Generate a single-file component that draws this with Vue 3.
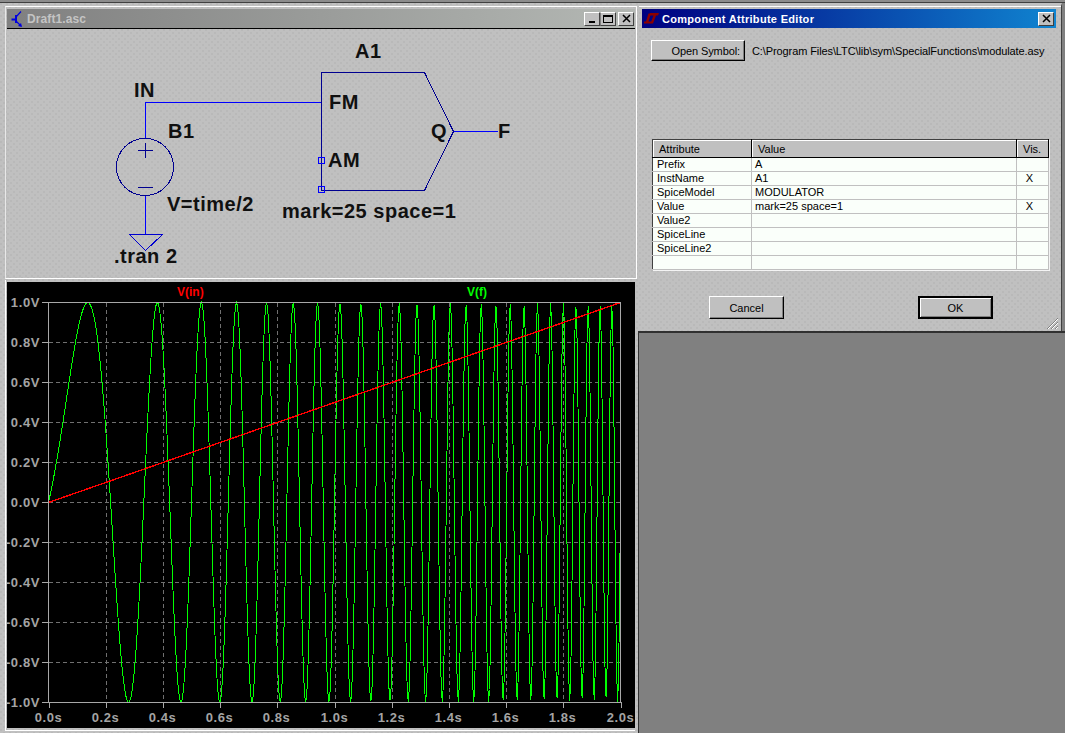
<script setup>
  // plot area of the waveform pane, in page pixels
  const left = 48.5;
  const right = 620.5;
  const zero = 501.5;
  const volts = 200;
  const perSec = (right - left) / 2;

  const xTicks = [];
  for (let i = 0; i <= 10; i++) {
    xTicks.push({ x: Math.round(left + i * 57.2) + 0.5, label: (i * 0.2).toFixed(1) + "s" });
  }

  const yTicks = [];
  for (let i = 5; i >= -5; i--) {
    yTicks.push({ y: zero - i * 40, label: (i * 0.2).toFixed(1) + "V" });
  }

  // MODULATOR output with mark=25 space=1, FM = time/2
  const points = [];
  for (let x = 0; x <= right - left; x++) {
    const t = x / perSec;
    const y = zero - volts * Math.sin(2 * Math.PI * (t + 6 * t * t));
    points.push((left + x) + "," + y.toFixed(1));
  }
  const trace = points.join(" ");

  const rows = [
    { name: "Prefix", value: "A", vis: "" },
    { name: "InstName", value: "A1", vis: "X" },
    { name: "SpiceModel", value: "MODULATOR", vis: "" },
    { name: "Value", value: "mark=25 space=1", vis: "X" },
    { name: "Value2", value: "", vis: "" },
    { name: "SpiceLine", value: "", vis: "" },
    { name: "SpiceLine2", value: "", vis: "" },
    { name: "", value: "", vis: "" },
  ];
</script>

<template>
  <main class="desk">
    <div class="strip"></div>
    <div class="panes">
      <section class="left dither">
        <div class="schematic">
          <header class="mdi-title">
            <svg class="app-icon" width="12" height="16" viewBox="0 0 12 16">
              <path d="M0.5 8.5H5M5 4V12" stroke="#0000e0" stroke-width="2" fill="none" />
              <path d="M5 6L10 0.5M5 10L10 15" stroke="#0000e0" stroke-width="1.2" fill="none" />
              <path d="M11 16L7 15L10 12Z" fill="#0000e0" />
            </svg>
            <span class="mdi-name">Draft1.asc</span>
            <span class="win-btn gap"><i class="min"></i></span>
            <span class="win-btn flat"><i class="max"></i></span>
            <span class="win-btn close"><svg width="9" height="9" viewBox="0 0 9 9"><path d="M1 1L8 8M8 1L1 8" stroke="#000" stroke-width="1.5" /></svg></span>
          </header>
          <svg class="canvas dither" width="628" height="248" viewBox="7 29 628 248">
            <g class="wire">
              <path d="M145.5 138V102.5H321.5" />
              <path d="M145.5 196V234" />
              <path d="M453.5 131.5H498" />
            </g>
            <g class="sym">
              <circle cx="145" cy="167" r="28.5" />
              <path d="M138 150.5H153M145.5 143V158M138 187.5H153" />
              <path d="M129.5 234.5H162.5L145.5 250.5Z" class="gnd" />
              <path d="M321.5 72.5H424.5L453.5 131.5L424.5 190.5H321.5Z" />
            </g>
            <g class="pin">
              <rect x="318.5" y="157.5" width="6" height="6" />
              <rect x="318.5" y="186.5" width="6" height="6" />
            </g>
            <g class="label">
              <text x="134" y="97">IN</text>
              <text x="168" y="138">B1</text>
              <text x="167" y="211">V=time/2</text>
              <text x="114" y="263">.tran 2</text>
              <text x="355" y="58">A1</text>
              <text x="329" y="109">FM</text>
              <text x="328" y="167">AM</text>
              <text x="431" y="138">Q</text>
              <text x="498" y="138">F</text>
              <text x="282" y="218">mark=25 space=1</text>
            </g>
          </svg>
        </div>

        <div class="wave-frame">
          <svg class="wave" width="628" height="446" viewBox="7 281 628 446">
            <g class="grid">
              <line v-for="t in xTicks.slice(1, 10)" :key="t.label" :x1="t.x" :x2="t.x" y1="302" y2="701" />
              <line v-for="t in yTicks.slice(1, 10)" :key="t.label" x1="49" x2="620" :y1="t.y" :y2="t.y" />
            </g>
            <polyline class="trace-f" :points="trace" />
            <line class="trace-in" :x1="left" :y1="zero" :x2="right" :y2="zero - volts" />
            <g class="axis">
              <rect :x="left" :y="zero - volts" :width="right - left" :height="volts * 2" />
              <line v-for="t in xTicks" :key="t.label" :x1="t.x" :x2="t.x" y1="701" y2="707" />
              <line v-for="t in yTicks" :key="t.label" x1="42" x2="48" :y1="t.y" :y2="t.y" />
            </g>
            <g class="ticks">
              <text v-for="t in yTicks" :key="t.label" x="40" :y="t.y + 4" text-anchor="end">{{ t.label }}</text>
              <text v-for="t in xTicks" :key="t.label" :x="t.x - 1" y="721" text-anchor="middle">{{ t.label }}</text>
            </g>
            <text class="name" x="177" y="295" fill="#ff0000">V(in)</text>
            <text class="name" x="467" y="295" fill="#00ff00">V(f)</text>
          </svg>
        </div>
      </section>

      <section class="right">
        <div class="dialog dither">
          <header class="dlg-title">
            <svg class="lt-logo" width="15" height="11" viewBox="0 0 15 11">
              <path d="M4.5 0.5L2 8.5H0L0 10.5H7L8 8.5H4.5L7 0.5Z" fill="#8c0000" />
              <path d="M6 0H15L14 2.5H12L9 10.5H6.5L9.5 2.5H5.5Z" fill="#8c0000" />
            </svg>
            <span class="dlg-name">Component Attribute Editor</span>
            <span class="win-btn dlg-close"><svg width="9" height="9" viewBox="0 0 9 9"><path d="M1 1L8 8M8 1L1 8" stroke="#000" stroke-width="1.5" /></svg></span>
          </header>

          <div class="symbol-row">
            <button class="btn open">Open Symbol:</button>
            <span class="path">C:\Program Files\LTC\lib\sym\SpecialFunctions\modulate.asy</span>
          </div>

          <table class="attrs">
            <thead>
              <tr><th>Attribute</th><th>Value</th><th>Vis.</th></tr>
            </thead>
            <tbody>
              <tr v-for="(r, i) in rows" :key="i">
                <td>{{ r.name }}</td>
                <td class="val">{{ r.value }}</td>
                <td class="vis">{{ r.vis }}</td>
              </tr>
            </tbody>
          </table>

          <div class="actions">
            <button class="btn">Cancel</button>
            <button class="btn ok">OK</button>
          </div>

          <svg class="grip" width="14" height="14" viewBox="0 0 14 14">
            <path d="M13 2L2 13M13 6L6 13M13 10L10 13" stroke="#808080" fill="none" />
            <path d="M13 3L3 13M13 7L7 13M13 11L11 13" stroke="#fff" fill="none" />
          </svg>
        </div>
        <div class="empty"></div>
      </section>
    </div>
  </main>
</template>

<style>
html, body {
  margin: 0;
  background: #808080;
  overflow: hidden;
}
</style>

<style scoped>
.desk {
  width: 1065px;
  height: 733px;
  display: flex;
  flex-direction: column;
  background: #808080;
  font-family: "Liberation Sans", Arial, sans-serif;
  overflow: hidden;
}

.strip {
  height: 2px;
  background: #8c8c8c;
  border-bottom: 1px solid #404040;
  flex: none;
}

.panes {
  flex: 1;
  display: flex;
  min-height: 0;
}

.dither {
  background-color: #c0c0c0;
  background-image:
    radial-gradient(circle at 1px 1px, #b9b9b9 0.8px, transparent 1px),
    radial-gradient(circle at 4px 4px, #b9b9b9 0.8px, transparent 1px);
  background-size: 6px 6px;
}

.left {
  width: 639px;
  flex: none;
  padding-top: 3px;
  box-sizing: border-box;
}

.schematic {
  margin-left: 5px;
  width: 632px;
  box-sizing: border-box;
  border-top: 1px solid #fff;
  border-left: 1px solid #e8e8e8;
  border-right: 1px solid #fff;
  border-bottom: 1px solid #fff;
  padding: 2px 0 1px 1px;
}

.mdi-title {
  height: 19px;
  margin-right: 1px;
  display: flex;
  align-items: center;
  background: linear-gradient(90deg, #808080, #b4b8b4);
}

.app-icon {
  margin-left: 4px;
  flex: none;
}

.mdi-name {
  margin-left: 4px;
  color: #c4c4c4;
  font-size: 12px;
  font-weight: bold;
  letter-spacing: 0.1px;
  flex: 1;
}

.canvas {
  display: block;
  border-top: 1px solid #000;
}

.win-btn {
  width: 16px;
  height: 14px;
  box-sizing: border-box;
  background: #c0c0c0;
  border: 1px solid;
  border-color: #fff #404040 #404040 #fff;
  display: flex;
  align-items: center;
  justify-content: center;
  position: relative;
  flex: none;
}

.win-btn.flat {
  border-left-color: #808080;
}

.win-btn.close {
  margin-left: 2px;
  margin-right: 1px;
}

.min {
  width: 6px;
  height: 2px;
  background: #000;
  margin-top: 7px;
}

.max {
  width: 10px;
  height: 8px;
  border: 1px solid #000;
  border-top-width: 2px;
  box-sizing: border-box;
}

.wire path {
  fill: none;
  stroke: #0000ff;
  shape-rendering: crispEdges;
}

.sym path,
.sym circle {
  fill: none;
  stroke: #000090;
  shape-rendering: crispEdges;
}

.sym .gnd {
  stroke: #0000d0;
}

.pin rect {
  fill: none;
  stroke: #0000ff;
  shape-rendering: crispEdges;
}

.label text {
  font-size: 20px;
  font-weight: bold;
  letter-spacing: 0.5px;
  fill: #101010;
}

.wave-frame {
  margin-left: 5px;
  width: 630px;
  margin-top: 1px;
  padding: 2px 0 2px 1px;
  box-sizing: border-box;
  border-left: 1px solid #fff;
  border-bottom: 1px solid #fff;
}

.wave {
  display: block;
  background: #000;
}

.grid line {
  stroke: #707070;
  stroke-dasharray: 4 3;
  shape-rendering: crispEdges;
}

.axis rect,
.axis line {
  fill: none;
  stroke: #a8a8a8;
  shape-rendering: crispEdges;
}

.trace-f {
  fill: none;
  stroke: #00ff00;
  shape-rendering: crispEdges;
}

.trace-in {
  stroke: #ff0000;
  stroke-width: 1.4;
  shape-rendering: crispEdges;
}

.ticks text {
  font-size: 13px;
  font-weight: bold;
  letter-spacing: 0.6px;
  fill: #a4a4a4;
}

.name {
  font-size: 12px;
  font-weight: bold;
}

.right {
  flex: 1;
  display: flex;
  flex-direction: column;
  min-width: 0;
}

.dialog {
  width: 423px;
  height: 328px;
  flex: none;
  margin-top: 0;
  padding: 3px 3px 0 3px;
  box-sizing: border-box;
  border-top: 3px solid #c0c0c0;
  border-right: 1px solid #404040;
  position: relative;
  box-shadow: inset 0 1px 0 #fff;
}

.dlg-title {
  height: 19px;
  margin-right: 2px;
  display: flex;
  align-items: center;
  background: linear-gradient(90deg, #000080, #1084d0);
}

.lt-logo {
  margin-left: 2px;
  flex: none;
}

.dlg-name {
  margin-left: 3px;
  color: #fff;
  font-size: 11px;
  font-weight: bold;
  letter-spacing: 0.3px;
  flex: 1;
}

.dlg-close {
  margin-right: 2px;
}

.symbol-row {
  display: flex;
  align-items: center;
  padding: 12px 0 0 9px;
}

.btn {
  background: #c0c0c0;
  border: 1px solid;
  border-color: #fff #000 #000 #fff;
  box-shadow: inset -1px -1px 0 #808080;
  font-family: inherit;
  font-size: 11px;
  color: #000;
  padding: 0;
}

.open {
  width: 94px;
  height: 21px;
  text-align: right;
  padding-right: 4px;
  letter-spacing: -0.1px;
}

.path {
  margin-left: 7px;
  font-size: 11px;
  color: #000;
  letter-spacing: -0.1px;
  white-space: nowrap;
}

.attrs {
  margin: 78px 0 0 10px;
  width: 397px;
  table-layout: fixed;
  border-collapse: collapse;
  font-size: 11px;
  color: #000;
  background: #fafffa;
  border-top: 1px solid #404040;
  border-left: 1px solid #404040;
  box-shadow: 1px 1px 0 #f4f4f4;
}

.attrs th {
  height: 18px;
  padding: 0 0 0 6px;
  box-sizing: border-box;
  background: #c0c0c0;
  font-weight: normal;
  text-align: left;
  border-right: 1px solid #000;
  border-bottom: 1px solid #000;
  box-shadow: inset 1px 1px 0 #fff;
}

.attrs th:nth-child(1) {
  width: 99px;
}

.attrs th:nth-child(3) {
  width: 32px;
}

.attrs td {
  height: 14px;
  padding: 0 0 0 4px;
  box-sizing: border-box;
  line-height: 13px;
  border-right: 1px solid #c0c0c0;
  border-bottom: 1px solid #c0c0c0;
  overflow: hidden;
  white-space: nowrap;
}

.attrs td.val {
  padding-left: 3px;
}

.attrs td.vis {
  text-align: center;
  padding: 0 6px 0 0;
}

.actions {
  display: flex;
  justify-content: space-between;
  padding: 26px 65px 0 67px;
}

.actions .btn {
  width: 75px;
  height: 23px;
}

.actions .ok {
  border: 2px solid #000;
  box-shadow: inset 1px 1px 0 #fff, inset -1px -1px 0 #808080;
}

.grip {
  position: absolute;
  right: 2px;
  bottom: 1px;
}

.empty {
  flex: 1;
  background-color: #808080;
  border-top: 2px solid #303030;
  border-left: 1px solid #303030;
  margin-left: -1px;
}
</style>
